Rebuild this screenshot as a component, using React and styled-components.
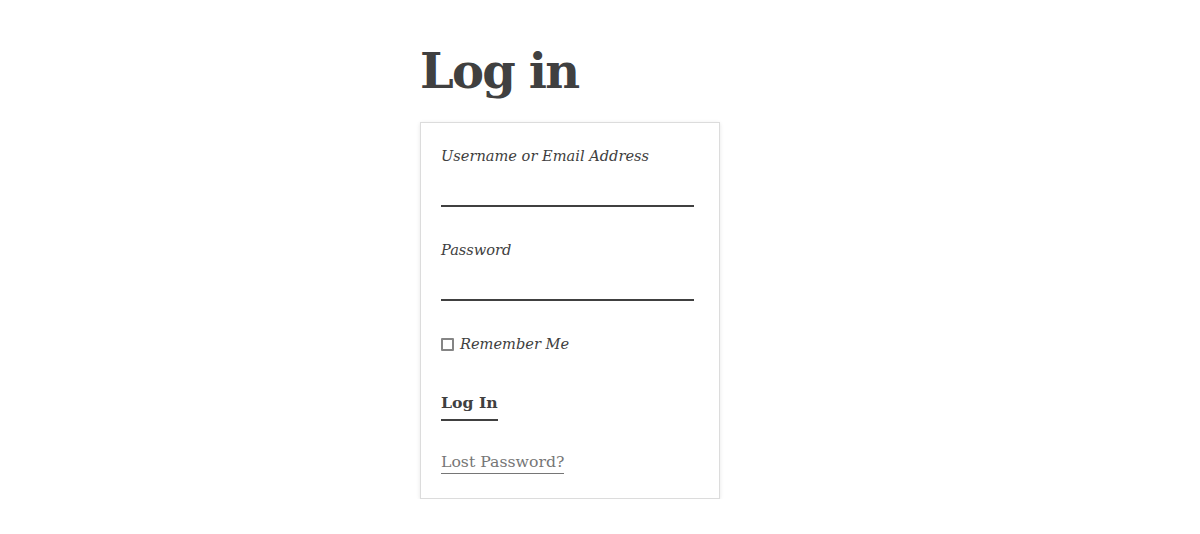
import React from "react";
import styled, { createGlobalStyle } from "styled-components";

const Global = createGlobalStyle`
  html, body { margin: 0; padding: 0; background: #fff; }
  body { font-family: "DejaVu Serif", "Liberation Serif", serif; color: #404040; }
`;

const Page = styled.div`
  display: flex;
  justify-content: center;
  padding-top: 36px;
`;

const Column = styled.main`
  width: 360px;
  display: flex;
  flex-direction: column;
`;

const Title = styled.h1`
  margin: 0 0 16px 0;
  font-size: 48px;
  line-height: 70px;
  font-weight: 700;
  color: #404040;
  letter-spacing: -1.8px;
`;

const Card = styled.form`
  width: 300px;
  box-sizing: border-box;
  border: 1px solid #dcdcdc;
  box-shadow: 0 1px 4px rgba(0, 0, 0, 0.1);
  padding: 20px 25px 24px 20px;
  display: flex;
  flex-direction: column;
`;

const Field = styled.div`
  display: flex;
  flex-direction: column;
  margin-bottom: ${(p) => p.$mb || 0}px;
`;

const Label = styled.label`
  font-style: italic;
  font-size: 14.6px;
  line-height: 26px;
  color: #404040;
`;

const Input = styled.input`
  border: none;
  border-bottom: 2px solid #404040;
  outline: none;
  height: 36px;
  padding: 0;
  font: inherit;
  background: transparent;
`;

const Check = styled.label`
  display: flex;
  align-items: center;
  gap: 6px;
  font-style: italic;
  font-size: 14.6px;
  line-height: 26px;
  margin-bottom: 34px;
`;

const Box = styled.span`
  width: 9px;
  height: 9px;
  border: 2px solid #858585;
  border-radius: 1px;
  display: inline-block;
  margin-top: 0;
  flex-shrink: 0;
`;

const Button = styled.button`
  align-self: flex-start;
  background: none;
  border: none;
  border-bottom: 2px solid #404040;
  padding: 0 0 4px 0;
  font-family: inherit;
  font-weight: 700;
  font-size: 15.7px;
  line-height: 24px;
  color: #404040;
  margin-bottom: 30px;
  cursor: pointer;
`;

const Lost = styled.a`
  align-self: flex-start;
  font-size: 15.7px;
  line-height: 22px;
  color: #767676;
  text-decoration: none;
  border-bottom: 1px solid #767676;
`;

export default function App() {
  return (
    <>
      <Global />
      <Page>
        <Column>
          <Title>Log in</Title>
          <Card onSubmit={(e) => e.preventDefault()}>
            <Field $mb={30}>
              <Label>Username or Email Address</Label>
              <Input type="text" />
            </Field>
            <Field $mb={30}>
              <Label>Password</Label>
              <Input type="password" />
            </Field>
            <Check>
              <Box />
              Remember Me
            </Check>
            <Button type="submit">Log In</Button>
            <Lost href="#">Lost Password?</Lost>
          </Card>
        </Column>
      </Page>
    </>
  );
}
